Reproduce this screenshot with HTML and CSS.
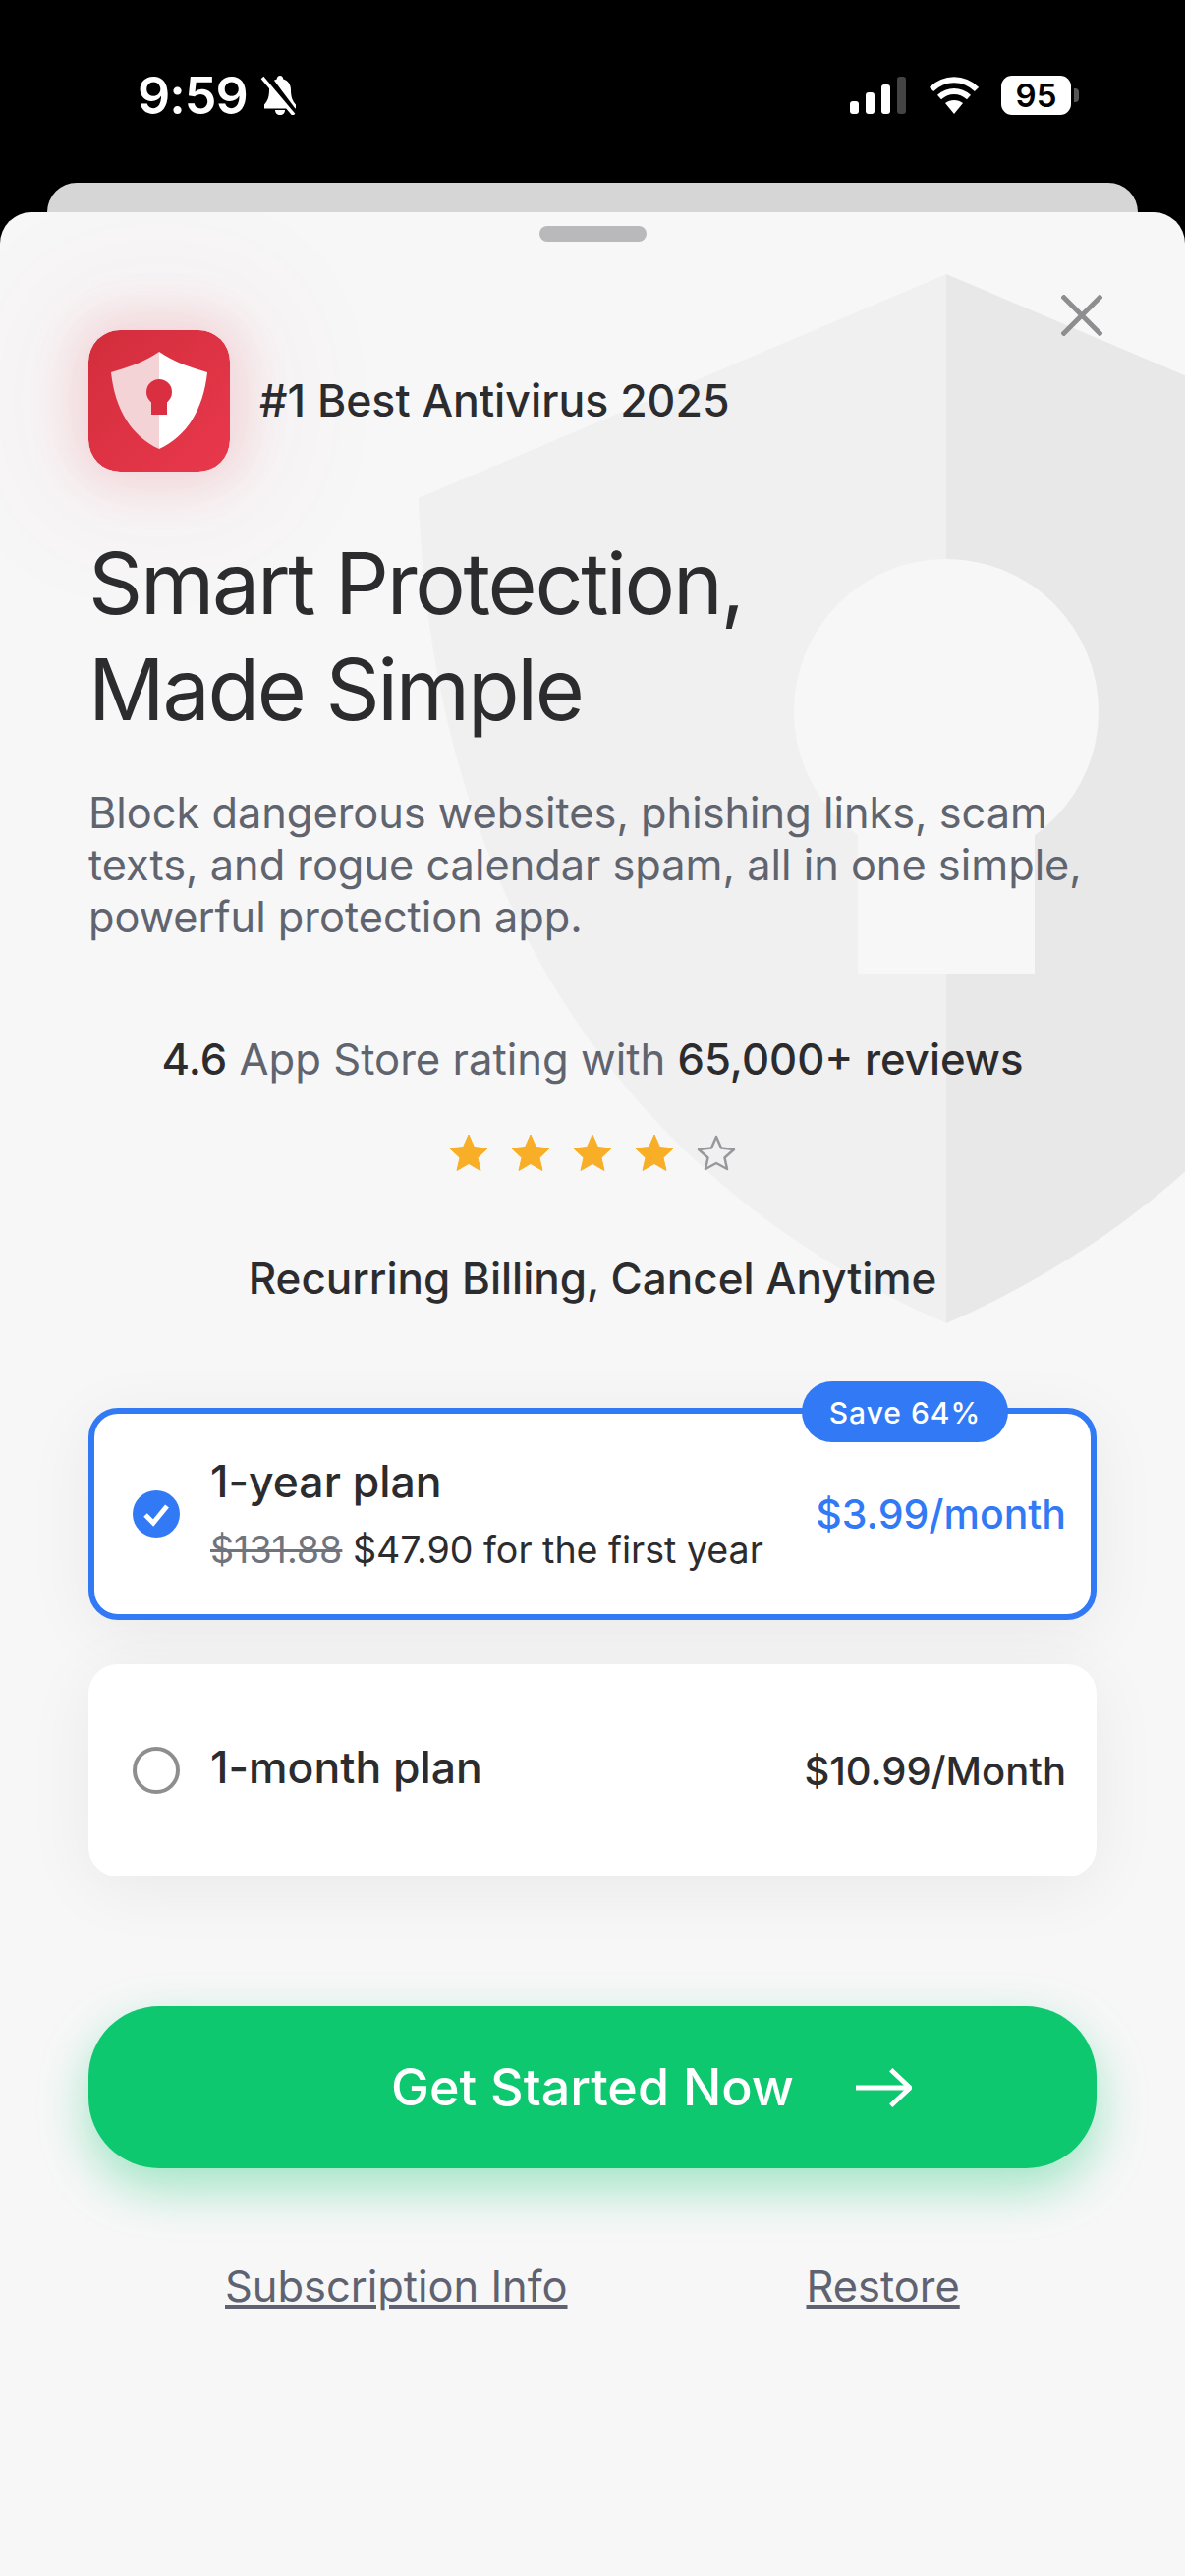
FILE: index.html
```html
<!DOCTYPE html>
<html lang="en">
<head>
    <meta charset="UTF-8">
    <meta name="viewport" content="width=device-width, initial-scale=1.0">
    <title>Smart Protection</title>
    <link rel="stylesheet" href="styles.css">
</head>
<body>

    <div class="status-bar">
        <div class="status-left">
            <span class="time">9:59</span>
            <svg class="bell" viewBox="0 0 40 40">
                <path d="M20 0c2 0 3 1.500 3.300 3.500 5 1.500 7.700 5.500 7.700 11 0 7 1.500 11 5 15v4H4v-4c3.500-4 5-8 5-15 0-5.500 2.700-9.500 7.700-11C17 1.500 18 0 20 0z" fill="#fff"/>
                <path d="M15 35h10c0 3-2 5-5 5s-5-2-5-5z" fill="#fff"/>
                <path d="M6 0l30 40" stroke="#000" stroke-width="7"/>
                <path d="M2 2l32 38" stroke="#fff" stroke-width="3.500"/>
            </svg>
        </div>
        <div class="status-right">
            <svg class="signal" viewBox="0 0 57 38">
                <rect x="0" y="25" width="9" height="13" rx="3" fill="#fff"/>
                <rect x="16" y="16" width="9" height="22" rx="3" fill="#fff"/>
                <rect x="32" y="8" width="9" height="30" rx="3" fill="#fff"/>
                <rect x="48" y="0" width="9" height="38" rx="3" fill="#444"/>
            </svg>
            <svg class="wifi" viewBox="0 0 50 38">
                <path d="M2 13C15 0 35 0 48 13" fill="none" stroke="#fff" stroke-width="6"/>
                <path d="M10 21c9-8 21-8 30 0" fill="none" stroke="#fff" stroke-width="6"/>
                <path d="M16 27c5-4 13-4 18 0L25 38z" fill="#fff"/>
            </svg>
            <div class="battery">95</div>
            <div class="battery-nub"></div>
        </div>
    </div>

    <div class="back-card"></div>

    <div class="sheet">
        <!-- big faded shield behind the text -->
        <svg class="watermark" viewBox="0 0 1206 1100">
            <path d="M963 3L426 231C440 640 640 930 963 1071z" fill="#f0f0f1"/>
            <path d="M963 3L1500 231C1486 640 1286 930 963 1071z" fill="#e8e8e9"/>
            <circle cx="963" cy="448" r="155" fill="#f7f7f8"/>
            <rect x="873" y="540" width="180" height="175" fill="#f7f7f8"/>
        </svg>

        <div class="handle"></div>

        <svg class="close" viewBox="0 0 42 42">
            <path d="M1 1l40 40M41 1L1 41" stroke="#8e8e90" stroke-width="5"/>
        </svg>

        <div class="brand">
            <svg class="app-icon" viewBox="0 0 144 144">
                <defs>
                    <linearGradient id="iconBg" x1="0" y1="0" x2="1" y2="1">
                        <stop offset="0" stop-color="#d22d3c"/>
                        <stop offset="1" stop-color="#e9394c"/>
                    </linearGradient>
                </defs>
                <rect width="144" height="144" rx="32" fill="url(#iconBg)"/>
                <path d="M72 22C58 32 40 38 23 43c4 38 21 65 49 78z" fill="#f3d3d6"/>
                <path d="M72 22c14 10 32 16 49 21-4 38-21 65-49 78z" fill="#fff"/>
                <circle cx="72" cy="63" r="13" fill="#d92f40"/>
                <rect x="64" y="66" width="16" height="20" fill="#d92f40"/>
            </svg>
            <span class="brand-text">#1 Best Antivirus 2025</span>
        </div>

        <h1>Smart Protection,<br>Made Simple</h1>

        <p class="intro">Block dangerous websites, phishing links, scam<br>texts, and rogue calendar spam, all in one simple,<br>powerful protection app.</p>

        <p class="rating"><strong>4.6</strong> App Store rating with <strong>65,000+ reviews</strong></p>

        <div class="stars">
            <svg viewBox="0 0 40 38"><path d="M20 1l5.500 12.500L39 15 29 24.500 32 37.500 20 30.500 8 37.500 11 24.500 1 15l13.500-1.500z" fill="#f8ae27" stroke="#f8ae27" stroke-linejoin="round"/></svg>
            <svg viewBox="0 0 40 38"><path d="M20 1l5.500 12.500L39 15 29 24.500 32 37.500 20 30.500 8 37.500 11 24.500 1 15l13.500-1.500z" fill="#f8ae27" stroke="#f8ae27" stroke-linejoin="round"/></svg>
            <svg viewBox="0 0 40 38"><path d="M20 1l5.500 12.500L39 15 29 24.500 32 37.500 20 30.500 8 37.500 11 24.500 1 15l13.500-1.500z" fill="#f8ae27" stroke="#f8ae27" stroke-linejoin="round"/></svg>
            <svg viewBox="0 0 40 38"><path d="M20 1l5.500 12.500L39 15 29 24.500 32 37.500 20 30.500 8 37.500 11 24.500 1 15l13.500-1.500z" fill="#f8ae27" stroke="#f8ae27" stroke-linejoin="round"/></svg>
            <svg viewBox="0 0 40 38"><path d="M20 3l5 11.500L38 16 28.500 24.500 31 36 20 30 9 36 11.500 24.500 2 16l13-1.500z" fill="none" stroke="#98989c" stroke-width="2.500" stroke-linejoin="round"/></svg>
        </div>

        <p class="billing">Recurring Billing, Cancel Anytime</p>

        <div class="plan selected">
            <span class="badge">Save 64%</span>
            <svg class="check" viewBox="0 0 48 48">
                <circle cx="24" cy="24" r="24" fill="#3179f5"/>
                <path d="M13 25l8 8 14-17" fill="none" stroke="#fff" stroke-width="5"/>
            </svg>
            <div class="plan-info">
                <div class="plan-name">1-year plan</div>
                <div class="plan-sub"><s>$131.88</s> $47.90 for the first year</div>
            </div>
            <div class="plan-price">$3.99/month</div>
        </div>

        <div class="plan">
            <span class="radio"></span>
            <div class="plan-info">
                <div class="plan-name lifted">1-month plan</div>
            </div>
            <div class="plan-price">$10.99/Month</div>
        </div>

        <button class="cta" type="button">
            <span></span>
            <span class="cta-text">Get Started Now</span>
            <svg class="arrow" viewBox="0 0 60 42">
                <path d="M1 21h56M38 2l20 19-20 19" fill="none" stroke="#fff" stroke-width="5"/>
            </svg>
        </button>

        <div class="links">
            <a href="#">Subscription Info</a>
            <a href="#">Restore</a>
        </div>
    </div>

</body>
</html>
```

FILE: styles.css
```css
* {
    box-sizing: border-box;
}

body {
    font-family: 'Inter', 'Liberation Sans', sans-serif;
    background-color: #000;
    color: #2c2c2e;
    margin: 0;
    height: 2622px;
    overflow: hidden;
    display: flex;
    flex-direction: column;
}

.status-bar {
    height: 186px;
    padding: 70px 108px 0 140px;
    display: flex;
    justify-content: space-between;
    align-items: flex-start;
}

.status-left, .status-right {
    display: flex;
    align-items: center;
    height: 54px;
}

.time {
    color: #fff;
    font-size: 52px;
    font-weight: 600;
    letter-spacing: -1px;
}

.bell {
    width: 40px;
    height: 40px;
    margin-left: 13px;
}

.signal {
    width: 57px;
    height: 38px;
}

.wifi {
    width: 50px;
    height: 38px;
    margin-left: 24px;
}

.battery {
    width: 71px;
    height: 40px;
    margin-left: 23px;
    background-color: #fff;
    border-radius: 11px;
    color: #000;
    font-size: 33px;
    font-weight: 600;
    text-align: center;
    line-height: 40px;
}

.battery-nub {
    width: 5px;
    height: 14px;
    margin-left: 3px;
    background-color: #555;
    border-radius: 0 4px 4px 0;
}

.back-card {
    height: 30px;
    margin: 0 48px;
    flex-shrink: 0;
    background-color: #d6d6d6;
    border-radius: 30px 30px 0 0;
}

.sheet {
    position: relative;
    flex: 1;
    padding: 0 90px;
    background-color: #f7f7f8;
    border-radius: 32px 32px 0 0;
    overflow: hidden;
}

.watermark {
    position: absolute;
    top: 60px;
    left: 0;
    width: 1206px;
    height: 1100px;
}

.handle {
    position: relative;
    width: 109px;
    height: 16px;
    margin: 14px auto 0;
    background-color: #b9b9bb;
    border-radius: 8px;
}

.close {
    position: absolute;
    top: 84px;
    right: 84px;
    width: 42px;
    height: 42px;
}

.brand {
    position: relative;
    display: flex;
    align-items: center;
    margin-top: 90px;
    height: 144px;
}

.app-icon {
    width: 144px;
    height: 144px;
    border-radius: 32px;
    box-shadow: 0 0 50px 12px rgba(225, 50, 70, 0.16), 0 0 120px 70px rgba(225, 50, 70, 0.035);
}

.brand-text {
    margin-left: 30px;
    font-size: 44.6px;
    font-weight: 450;
}

h1 {
    position: relative;
    margin: 60px 0 0;
    font-size: 86px;
    font-weight: 400;
    line-height: 108px;
    letter-spacing: -2.3px;
}

.intro {
    position: relative;
    margin: 45px 0 0;
    color: #60646f;
    font-size: 43.3px;
    line-height: 53px;
}

.rating {
    position: relative;
    margin: 92px 0 0;
    color: #60646f;
    font-size: 43.6px;
    line-height: 54px;
    text-align: center;
}

.rating strong {
    color: #2c2c2e;
    font-weight: 500;
}

.stars {
    position: relative;
    display: flex;
    justify-content: center;
    gap: 23px;
    margin-top: 48px;
}

.stars svg {
    width: 40px;
    height: 38px;
}

.billing {
    position: relative;
    margin: 82px 0 0;
    font-size: 44px;
    font-weight: 500;
    line-height: 54px;
    text-align: center;
}

.plan {
    position: relative;
    display: flex;
    align-items: center;
    height: 216px;
    margin-top: 45px;
    padding: 0 25px 0 39px;
    background-color: #fff;
    border: 6px solid #fff;
    border-radius: 30px;
    box-shadow: 0 12px 70px rgba(0, 0, 0, 0.06);
}

.plan.selected {
    border-color: #3179f5;
    margin-top: 105px;
}

.badge {
    position: absolute;
    top: -33px;
    left: 720px;
    width: 210px;
    height: 62px;
    background-color: #3179f5;
    border-radius: 31px;
    color: #fff;
    font-size: 30px;
    font-weight: 500;
    letter-spacing: 1px;
    line-height: 64px;
    text-align: center;
}

.check, .radio {
    width: 48px;
    height: 48px;
    flex-shrink: 0;
}

.radio {
    border: 4px solid #8e8e90;
    border-radius: 50%;
}

.plan-info {
    flex: 1;
    margin-left: 31px;
}

.plan-name {
    font-size: 44.5px;
    font-weight: 450;
    line-height: 54px;
}

.plan-name.lifted {
    margin-top: -6px;
}

.plan-sub {
    margin-top: 20px;
    font-size: 37.6px;
    line-height: 46px;
}

.plan-sub s {
    color: #70747c;
}

.plan-price {
    font-size: 40px;
    font-weight: 450;
}

.selected .plan-price {
    color: #3179f5;
    font-size: 41px;
}

.cta {
    display: grid;
    grid-template-columns: 1fr auto 1fr;
    column-gap: 62px;
    align-items: center;
    width: 100%;
    height: 165px;
    margin-top: 132px;
    padding: 0;
    font-family: inherit;
    background-color: #0ec86f;
    border: none;
    border-radius: 72px;
    box-shadow: 0 20px 50px rgba(14, 200, 111, 0.38);
}

.cta-text {
    color: #fff;
    font-size: 52px;
    font-weight: 500;
}

.arrow {
    width: 58px;
    height: 42px;
}

.links {
    display: flex;
    gap: 243px;
    margin-top: 95px;
    padding-left: 139px;
    line-height: 50px;
}

.links a {
    color: #5f6270;
    font-size: 43.4px;
}
```
